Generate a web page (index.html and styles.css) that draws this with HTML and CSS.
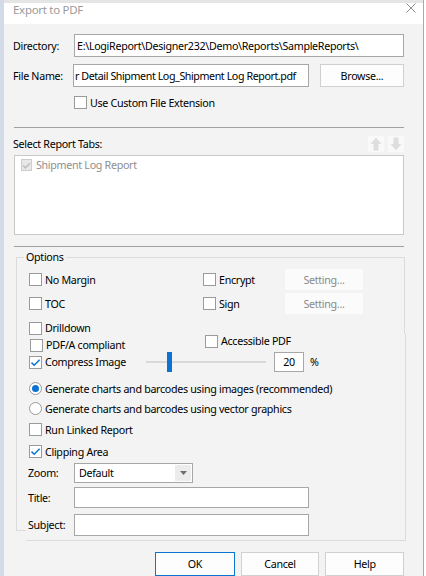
FILE: index.html
```html
<!DOCTYPE html>
<html lang="en">
<head>
<meta charset="utf-8">
<title>Export to PDF</title>
<link rel="stylesheet" href="styles.css">
</head>
<body>
<div class="screen">
  <div class="edge"></div>
  <div class="dialog">
    <div class="titlebar">
      <span class="title">Export to PDF</span>
      <svg class="close" width="10" height="10" viewBox="0 0 10 10"><path d="M0.5 0.5 L9.5 9.5 M9.5 0.5 L0.5 9.5" stroke="#8c8c8c" stroke-width="1" fill="none"/></svg>
    </div>
    <div class="content">
      <div class="row-dir">
        <span class="lbl">Directory:</span>
        <div class="field">E:\LogiReport\Designer232\Demo\Reports\SampleReports\</div>
      </div>
      <div class="row-file">
        <span class="lbl">File Name:</span>
        <div class="field fname">r Detail Shipment Log_Shipment Log Report.pdf</div>
        <div class="btn">Browse...</div>
      </div>
      <div class="row-ext">
        <span class="check"><span class="cb"></span><span>Use Custom File Extension</span></span>
      </div>
      <div class="sep"></div>
      <div class="tabs-head">
        <span>Select Report Tabs:</span>
        <div class="arrows">
          <span class="abtn"><svg width="16" height="16" viewBox="0 0 16 16"><path d="M8 1.5 L13.5 8 H10.5 V14.5 H5.5 V8 H2.5 Z" fill="#dedede"/></svg></span>
          <span class="abtn"><svg width="16" height="16" viewBox="0 0 16 16"><path d="M8 14.5 L13.5 8 H10.5 V1.5 H5.5 V8 H2.5 Z" fill="#dedede"/></svg></span>
        </div>
      </div>
      <div class="listbox">
        <div class="item">
          <span class="cb cb-disabled"><svg width="9" height="9" viewBox="0 0 10 10"><path d="M1.2 5 L3.8 7.6 L8.8 2.4" stroke="#bdbdbd" stroke-width="1.7" fill="none"/></svg></span>
          <span class="dim">Shipment Log Report</span>
        </div>
      </div>
      <div class="sep sep2"></div>

      <div class="group">
        <span class="legend">Options</span>
        <div class="opt-row row-a">
          <span class="check"><span class="cb"></span><span>No Margin</span></span>
          <span class="check"><span class="cb"></span><span>Encrypt</span></span>
          <span class="setbtn">Setting...</span>
        </div>
        <div class="opt-row row-b">
          <span class="check"><span class="cb"></span><span>TOC</span></span>
          <span class="check"><span class="cb"></span><span>Sign</span></span>
          <span class="setbtn">Setting...</span>
        </div>
        <div class="opt-row row-c">
          <span class="check"><span class="cb"></span><span>Drilldown</span></span>
        </div>

        <div class="panel">
          <div class="row-d">
            <span class="check pdfa"><span class="cb"></span><span>PDF/A compliant</span></span>
            <span class="check access"><span class="cb"></span><span>Accessible PDF</span></span>
          </div>
          <div class="row-e">
            <span class="check"><span class="cb"><svg width="11" height="11" viewBox="0 0 11 11"><path d="M1.5 5.6 L4.2 8.3 L9.6 2.8" stroke="#0a74d4" stroke-width="1.5" fill="none"/></svg></span><span>Compress Image</span></span>
            <div class="slider"><span class="track"></span><span class="thumb"></span></div>
            <div class="field num">20</div>
            <span>%</span>
          </div>
          <div class="line-row r-f">
            <span class="check"><span class="radio on"><span class="dot"></span></span><span>Generate charts and barcodes using images (recommended)</span></span>
          </div>
          <div class="line-row r-g">
            <span class="check"><span class="radio"></span><span>Generate charts and barcodes using vector graphics</span></span>
          </div>
          <div class="line-row r-h">
            <span class="check"><span class="cb"></span><span>Run Linked Report</span></span>
          </div>
          <div class="line-row r-i">
            <span class="check"><span class="cb"><svg width="11" height="11" viewBox="0 0 11 11"><path d="M1.5 5.6 L4.2 8.3 L9.6 2.8" stroke="#0a74d4" stroke-width="1.5" fill="none"/></svg></span><span>Clipping Area</span></span>
          </div>
          <div class="form-row r-j">
            <span class="flbl">Zoom:</span>
            <div class="combo"><span class="combo-val">Default</span><span class="combo-arrow"><svg width="7" height="4" viewBox="0 0 7 4"><path d="M0 0 H7 L3.5 4 Z" fill="#6e6e6e"/></svg></span></div>
          </div>
          <div class="form-row r-k">
            <span class="flbl">Title:</span>
            <div class="field ffield"></div>
          </div>
          <div class="form-row r-l">
            <span class="flbl">Subject:</span>
            <div class="field ffield"></div>
          </div>
        </div>
      </div>

      <div class="buttons">
        <span class="btn b-ok">OK</span>
        <span class="btn b-cancel">Cancel</span>
        <span class="btn b-help">Help</span>
      </div>
    </div>
  </div>
</div>
</body>
</html>
```

FILE: styles.css
```css
* { box-sizing: border-box; }
html, body { margin: 0; padding: 0; }
body {
  width: 426px;
  height: 576px;
  overflow: hidden;
  background: #ffffff;
  font-family: "Noto Sans", "Segoe UI", sans-serif;
  font-size: 10.7px;
  letter-spacing: -0.3px;
  color: #000;
}
.screen { display: flex; height: 576px; }
.edge { flex: none; width: 4px; background: #d3dbe8; }
.dialog {
  flex: none;
  width: 420px;
  height: 576px;
  background: #f3f3f3;
  border-right: 1px solid #a9a9a9;
  display: flex;
  flex-direction: column;
}
.titlebar {
  flex: none;
  height: 24px;
  background: #fff;
  border-top: 3px solid #e5e5e5;
  display: flex;
  justify-content: space-between;
  align-items: flex-start;
  padding: 0 7px 0 9px;
}
.title { color: #9b9b9b; line-height: 14px; font-size: 11.5px; }
.close { display: block; }

.content { padding: 0 19px 0 9px; }

.lbl, .flbl { white-space: nowrap; }

.field {
  background: #fff;
  border: 1px solid #a7a7a7;
  padding: 0 2px;
  display: flex;
  align-items: center;
  white-space: nowrap;
  overflow: hidden;
  height: 100%;
}
.fname { padding-left: 1px; letter-spacing: -0.42px; }
.btn {
  background: #fdfdfd;
  border: 1px solid #d0d0d0;
  display: flex;
  align-items: center;
  justify-content: center;
  height: 100%;
}

.row-dir {
  display: grid;
  grid-template-columns: 61px 1fr;
  align-items: center;
  height: 23px;
  margin-top: 10px;
}
.row-file {
  display: grid;
  grid-template-columns: 49px 236px 84px;
  column-gap: 11px;
  align-items: center;
  height: 23px;
  margin-top: 7px;
}
.row-ext {
  display: flex;
  align-items: center;
  height: 13px;
  margin-top: 9px;
  padding-left: 61px;
}

.check { display: inline-flex; align-items: center; gap: 3px; white-space: nowrap; }
.cb {
  flex: none;
  width: 13px;
  height: 13px;
  background: #fff;
  border: 1px solid #9a9a9a;
  display: inline-flex;
  align-items: center;
  justify-content: center;
}
.cb svg { display: block; }
.cb-disabled { width: 11px; height: 12px; background: #e8e8e8; border-color: #cdcdcd; }
.radio {
  flex: none;
  width: 13px;
  height: 13px;
  border: 1px solid #9a9a9a;
  border-radius: 50%;
  background: #fff;
  display: inline-flex;
  align-items: center;
  justify-content: center;
}
.dot { width: 7px; height: 7px; border-radius: 50%; background: #0a74d4; }

.sep { height: 1px; background: #a0a0a0; margin: 18px 0 0 1px; }
.sep2 { margin-top: 11px; }

.tabs-head {
  display: flex;
  justify-content: space-between;
  align-items: center;
  height: 16px;
  margin-top: 8px;
}
.arrows { display: flex; gap: 4px; }
.abtn { width: 16px; height: 16px; background: #f9f9f9; display: block; }
.abtn svg { display: block; }

.listbox {
  height: 80px;
  margin: 3px 0 0 1px;
  background: #fff;
  border: 1px solid #c9c9c9;
  padding: 2px 0 0 6px;
}
.item { display: flex; align-items: center; gap: 4px; height: 14px; }
.dim { color: #8e8e8e; }

.group {
  margin: 10px 0 0 3px;
  width: 389px;
  border: 1px solid #dcdcdc;
}
.legend {
  display: block;
  width: max-content;
  margin: -8px 0 0 7px;
  padding: 0 2px;
  background: #f3f3f3;
  line-height: 14px;
}
.opt-row {
  display: grid;
  grid-template-columns: 174px 82px 78px;
  align-items: center;
  padding-left: 12px;
}
.row-a { height: 21px; margin-top: 5px; }
.row-b { height: 21px; margin-top: 3px; }
.row-c { height: 13px; margin-top: 7px; }
.setbtn {
  height: 21px;
  background: #fbfbfb;
  color: #8a8a8a;
  display: flex;
  align-items: center;
  justify-content: center;
}

.panel {
  margin: 0 -2px -11px 9px;
  padding: 0 0 4px 3px;
  background: #f3f3f3;
  border-right: 1px solid #dcdcdc;
  border-bottom: 1px solid #dcdcdc;
}
.row-d {
  display: grid;
  grid-template-columns: 176px auto;
  height: 18px;
}
.pdfa { align-self: end; margin-left: 1px; }
.access { align-self: start; }
.row-e {
  display: grid;
  grid-template-columns: 117px 120px 30px auto;
  column-gap: 0;
  align-items: center;
  height: 20px;
}
.slider { position: relative; height: 20px; }
.track { position: absolute; left: 0; right: 0; top: 9px; height: 2px; background: #d9d9d9; }
.thumb { position: absolute; left: 21px; top: 0; width: 5px; height: 20px; background: #0a74d4; }
.num { margin-left: 8px; width: 30px; justify-content: center; }
.row-e > span:last-child { margin-left: 14px; }

.line-row { display: flex; align-items: center; height: 13px; }
.r-f { margin-top: 10px; }
.r-g { margin-top: 7px; }
.r-h { margin-top: 8px; }
.r-i { margin-top: 9px; }

.form-row {
  display: grid;
  grid-template-columns: 45px auto;
  align-items: center;
}
.flbl { margin-left: -1px; }
.r-j { height: 20px; margin-top: 5px; }
.r-k { height: 21px; margin-top: 4px; }
.r-l { height: 22px; margin-top: 6px; }
.ffield { width: 235px; }
.combo {
  width: 119px;
  height: 20px;
  background: #fff;
  border: 1px solid #a7a7a7;
  display: flex;
  align-items: stretch;
}
.combo-val { flex: 1; display: flex; align-items: center; padding-left: 4px; }
.combo-arrow {
  width: 16px;
  margin: 1px 1px 1px 0;
  background: #ececec;
  display: flex;
  align-items: center;
  justify-content: center;
}
.combo-arrow svg { display: block; }

.buttons {
  display: flex;
  gap: 6px;
  height: 24px;
  margin-top: 21px;
  padding-left: 142px;
}
.b-ok { width: 80px; border-color: #0a74d4; }
.b-cancel { width: 79px; }
.b-help { width: 79px; }
```
